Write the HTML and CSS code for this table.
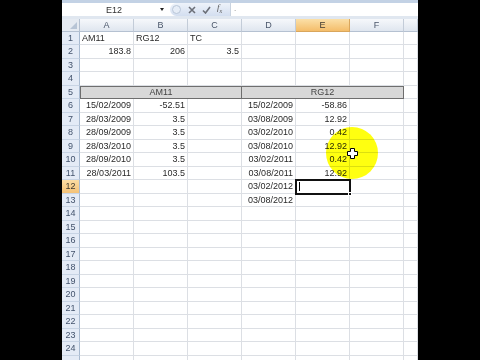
FILE: index.html
```html
<!DOCTYPE html>
<html>
<head>
<meta charset="utf-8">
<link rel="stylesheet" href="styles.css">
</head>
<body>
<div class="app">
  <div class="ribbon-edge"></div>
  <div class="formula-bar">
    <div class="namebox"><span class="namebox-text">E12</span><span class="dropdown"></span></div>
    <div class="sep"></div>
    <div class="fx-group">
      <span class="grip"></span>
      <svg class="fx-icon" width="8" height="8" viewBox="0 0 8 8"><path d="M1 1 L7 7 M7 1 L1 7" stroke="#6b6f78" stroke-width="1.6" fill="none"/></svg>
      <svg class="fx-icon" width="9" height="8" viewBox="0 0 9 8"><path d="M1 4.5 L3.5 7 L8 1" stroke="#6b6f78" stroke-width="1.6" fill="none"/></svg>
      <span class="fx-text">f<sub>x</sub></span>
    </div>
    <div class="formula-input"><span class="dots">.</span></div>
  </div>
  <div class="bar-gap"></div>
  <div class="sheet">
    <div class="corner"><span class="tri"></span></div>
    <div class="ch">A</div><div class="ch">B</div><div class="ch">C</div><div class="ch">D</div><div class="ch active">E</div><div class="ch">F</div><div class="ch"></div>

    <div class="rh">1</div><div class="c">AM11</div><div class="c">RG12</div><div class="c">TC</div><div class="c"></div><div class="c"></div><div class="c"></div><div class="c"></div>
    <div class="rh">2</div><div class="c r">183.8</div><div class="c r">206</div><div class="c r">3.5</div><div class="c"></div><div class="c"></div><div class="c"></div><div class="c"></div>
    <div class="rh">3</div><div class="c"></div><div class="c"></div><div class="c"></div><div class="c"></div><div class="c"></div><div class="c"></div><div class="c"></div>
    <div class="rh">4</div><div class="c"></div><div class="c"></div><div class="c"></div><div class="c"></div><div class="c"></div><div class="c"></div><div class="c"></div>
    <div class="rh">5</div><div class="c band band-first">AM11</div><div class="c band">RG12</div><div class="c"></div>
    <div class="rh">6</div><div class="c r">15/02/2009</div><div class="c r">-52.51</div><div class="c"></div><div class="c r">15/02/2009</div><div class="c r">-58.86</div><div class="c"></div><div class="c"></div>
    <div class="rh">7</div><div class="c r">28/03/2009</div><div class="c r">3.5</div><div class="c"></div><div class="c r">03/08/2009</div><div class="c r">12.92</div><div class="c"></div><div class="c"></div>
    <div class="rh">8</div><div class="c r">28/09/2009</div><div class="c r">3.5</div><div class="c"></div><div class="c r">03/02/2010</div><div class="c r">0.42</div><div class="c"></div><div class="c"></div>
    <div class="rh">9</div><div class="c r">28/03/2010</div><div class="c r">3.5</div><div class="c"></div><div class="c r">03/08/2010</div><div class="c r">12.92</div><div class="c"></div><div class="c"></div>
    <div class="rh">10</div><div class="c r">28/09/2010</div><div class="c r">3.5</div><div class="c"></div><div class="c r">03/02/2011</div><div class="c r">0.42</div><div class="c"></div><div class="c"></div>
    <div class="rh">11</div><div class="c r">28/03/2011</div><div class="c r">103.5</div><div class="c"></div><div class="c r">03/08/2011</div><div class="c r">12.92</div><div class="c"></div><div class="c"></div>
    <div class="rh active">12</div><div class="c"></div><div class="c"></div><div class="c"></div><div class="c r">03/02/2012</div><div class="c sel"><span class="caret"></span><span class="handle"></span></div><div class="c"></div><div class="c"></div>
    <div class="rh">13</div><div class="c"></div><div class="c"></div><div class="c"></div><div class="c r">03/08/2012</div><div class="c"></div><div class="c"></div><div class="c"></div>
    <div class="rh">14</div><div class="c"></div><div class="c"></div><div class="c"></div><div class="c"></div><div class="c"></div><div class="c"></div><div class="c"></div>
    <div class="rh">15</div><div class="c"></div><div class="c"></div><div class="c"></div><div class="c"></div><div class="c"></div><div class="c"></div><div class="c"></div>
    <div class="rh">16</div><div class="c"></div><div class="c"></div><div class="c"></div><div class="c"></div><div class="c"></div><div class="c"></div><div class="c"></div>
    <div class="rh">17</div><div class="c"></div><div class="c"></div><div class="c"></div><div class="c"></div><div class="c"></div><div class="c"></div><div class="c"></div>
    <div class="rh">18</div><div class="c"></div><div class="c"></div><div class="c"></div><div class="c"></div><div class="c"></div><div class="c"></div><div class="c"></div>
    <div class="rh">19</div><div class="c"></div><div class="c"></div><div class="c"></div><div class="c"></div><div class="c"></div><div class="c"></div><div class="c"></div>
    <div class="rh">20</div><div class="c"></div><div class="c"></div><div class="c"></div><div class="c"></div><div class="c"></div><div class="c"></div><div class="c"></div>
    <div class="rh">21</div><div class="c"></div><div class="c"></div><div class="c"></div><div class="c"></div><div class="c"></div><div class="c"></div><div class="c"></div>
    <div class="rh">22</div><div class="c"></div><div class="c"></div><div class="c"></div><div class="c"></div><div class="c"></div><div class="c"></div><div class="c"></div>
    <div class="rh">23</div><div class="c"></div><div class="c"></div><div class="c"></div><div class="c"></div><div class="c"></div><div class="c"></div><div class="c"></div>
    <div class="rh">24</div><div class="c"></div><div class="c"></div><div class="c"></div><div class="c"></div><div class="c"></div><div class="c"></div><div class="c"></div>
    <div class="rh"></div><div class="c"></div><div class="c"></div><div class="c"></div><div class="c"></div><div class="c"></div><div class="c"></div><div class="c"></div>
  </div>
  <div class="spot"></div>
  <svg class="pointer" width="11" height="11" viewBox="0 0 11 11"><path d="M3.5 0.5 H7.5 V3.5 H10.5 V7.5 H7.5 V10.5 H3.5 V7.5 H0.5 V3.5 H3.5 Z" fill="#fff" stroke="#000" stroke-width="1"/></svg>
</div>
</body>
</html>
```
FILE: styles.css
```css
* { box-sizing: border-box; margin: 0; padding: 0; }
body { background: #000; font-family: "Liberation Sans", Arial, sans-serif; }
.app { position: relative; width: 356px; height: 360px; margin-left: 62px; background: #fff; overflow: hidden; }
.ribbon-edge { height: 3px; background: #c3d2e5; }
.formula-bar { display: flex; height: 13px; background: #fff; }
.namebox { width: 106px; display: flex; align-items: center; font-size: 9px; color: #333; }
.namebox-text { flex: 1; text-align: center; padding-left: 6px; }
.dropdown { width: 0; height: 0; border-left: 2.5px solid transparent; border-right: 2.5px solid transparent; border-top: 3px solid #222; margin-right: 4px; }
.sep { width: 2px; }
.fx-group { width: 60px; display: flex; align-items: center; gap: 6px; padding-left: 2px; background: linear-gradient(#eef3fa, #d3def0); border-radius: 7px 0 0 7px; }
.grip { width: 9px; height: 9px; border-radius: 50%; border: 1px solid #b9c6d8; background: #e6edf7; margin-right: 1px; }
.fx-icon { display: block; }
.fx-text { font-family: "Liberation Serif", serif; font-style: italic; font-size: 9px; color: #555; line-height: 9px; }
.fx-text sub { font-size: 6px; }
.formula-input { flex: 1; border-left: 1px solid #c9d3e0; padding-left: 3px; font-size: 8px; color: #777; line-height: 11px; }
.bar-gap { height: 3px; background: #e0e7f0; }
.sheet { display: grid; grid-template-columns: 18px repeat(6, 54px) 14px; grid-template-rows: 12.5px repeat(25, 13.5px); }
.corner { position: relative; background: #e6ebf2; border-right: 1px solid #b5c1d1; border-bottom: 1px solid #b5c1d1; }
.tri { position: absolute; right: 2px; bottom: 2px; width: 0; height: 0; border-left: 7px solid transparent; border-bottom: 7px solid #b8c5d6; }
.ch { background: linear-gradient(#f6f8fb, #dfe6ef); border-right: 1px solid #c3ccd8; border-bottom: 1px solid #b5c1d1; font-size: 9px; line-height: 12px; text-align: center; color: #4a566a; }
.ch.active { background: linear-gradient(#fbe0a8, #f4bd6a); color: #3f3a30; border-color: #d9a65c; }
.rh { background: #e4ebf6; border-right: 1px solid #a8bad0; border-bottom: 1px solid #c8d4e4; font-size: 9px; line-height: 13px; text-align: center; color: #43536c; }
.rh.active { background: linear-gradient(#fbdca3, #f4c277); color: #3f3a30; }
.c { border-right: 1px solid #dcdfe4; border-bottom: 1px solid #dcdfe4; font-size: 9px; line-height: 13px; padding: 0 2px; white-space: nowrap; overflow: hidden; color: #2a2a2a; }
.r { text-align: right; }
.band { grid-column: span 3; background: #d8d8d8; border-top: 1px solid #6e6e6e; border-bottom: 1px solid #6e6e6e; border-right: 1px solid #6e6e6e; text-align: center; color: #444; line-height: 11.5px; }
.band-first { border-left: 1px solid #6e6e6e; }
.sel { position: relative; overflow: visible; outline: 2px solid #111; outline-offset: -1px; }
.caret { position: absolute; left: 3px; top: 2px; width: 1px; height: 9px; background: #000; }
.handle { position: absolute; right: -3px; bottom: -3px; width: 4px; height: 4px; background: #111; border: 1px solid #fff; }
.spot { position: absolute; left: 264px; top: 127px; width: 52px; height: 52px; border-radius: 50%; background: #ffff10; mix-blend-mode: multiply; }
.pointer { position: absolute; left: 285px; top: 148px; }
```
